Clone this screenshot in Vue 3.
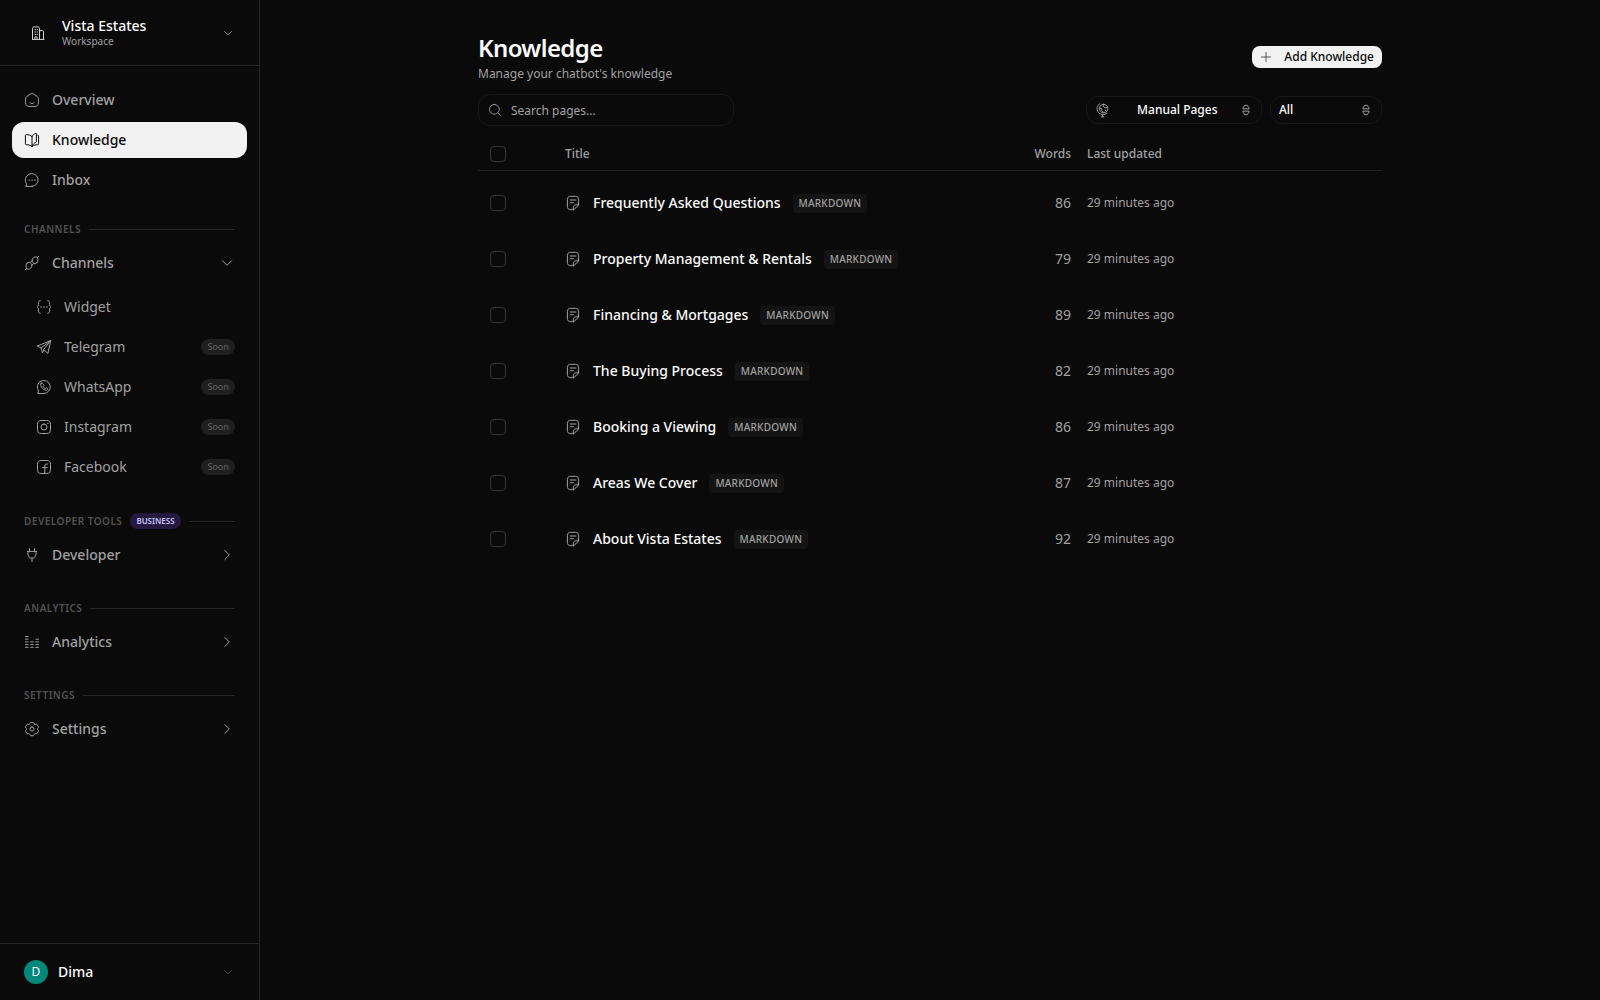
<template>
  <div class="app">
    <aside class="sidebar">
      <button class="workspace" type="button">
        <span class="workspace-logo"><Icon name="building" /></span>
        <span class="workspace-text">
          <span class="workspace-name">Vista Estates</span>
          <span class="workspace-type">Workspace</span>
        </span>
        <Icon name="chevronSmall" class="workspace-chevron" />
      </button>

      <nav class="nav">
        <a
          v-for="item in mainItems"
          :key="item.label"
          href="#"
          class="nav-item"
          :class="{ active: item.active }"
        >
          <Icon :name="item.icon" />
          <span class="nav-label">{{ item.label }}</span>
        </a>

        <section v-for="section in sections" :key="section.title" class="section">
          <div class="section-head">
            <span class="section-title">{{ section.title }}</span>
            <span v-if="section.badge" class="plan-badge">{{ section.badge }}</span>
            <span class="section-line"></span>
          </div>
          <button class="nav-item" type="button">
            <Icon :name="section.icon" />
            <span class="nav-label">{{ section.label }}</span>
            <Icon :name="section.children ? 'chevronDown' : 'chevronRight'" class="nav-chevron" />
          </button>
          <div v-if="section.children" class="children">
            <a v-for="child in section.children" :key="child.label" href="#" class="nav-item child">
              <Icon :name="child.icon" />
              <span class="nav-label">{{ child.label }}</span>
              <span v-if="child.soon" class="soon-badge">Soon</span>
            </a>
          </div>
        </section>
      </nav>

      <button class="user" type="button">
        <span class="avatar">D</span>
        <span class="user-name">Dima</span>
        <Icon name="chevronSmall" class="user-chevron" />
      </button>
    </aside>

    <main class="main">
      <div class="content">
        <header class="page-head">
          <div class="page-heading">
            <h1>Knowledge</h1>
            <p>Manage your chatbot's knowledge</p>
          </div>
          <button class="add-button" type="button">
            <Icon name="plus" />
            <span>Add Knowledge</span>
          </button>
        </header>

        <div class="toolbar">
          <label class="search">
            <Icon name="search" />
            <input v-model="query" type="text" placeholder="Search pages..." aria-label="Search pages" />
          </label>
          <div class="filters">
            <label class="select source">
              <Icon name="globe" class="select-icon" />
              <select v-model="source" aria-label="Source">
                <option>Manual Pages</option>
              </select>
              <Icon name="sort" class="select-arrow" />
            </label>
            <label class="select status">
              <select v-model="status" aria-label="Status">
                <option>All</option>
              </select>
              <Icon name="sort" class="select-arrow" />
            </label>
          </div>
        </div>

        <table class="pages">
          <thead>
            <tr>
              <th class="col-check">
                <input v-model="allSelected" type="checkbox" aria-label="Select all" />
              </th>
              <th class="col-title">Title</th>
              <th class="col-words">Words</th>
              <th class="col-updated">Last updated</th>
            </tr>
          </thead>
          <tbody>
            <tr v-for="page in filteredPages" :key="page.title">
              <td class="col-check">
                <input v-model="selected" type="checkbox" :value="page.title" :aria-label="page.title" />
              </td>
              <td class="col-title">
                <div class="page-title">
                  <Icon name="note" />
                  <span class="page-name">{{ page.title }}</span>
                  <span class="type-badge">Markdown</span>
                </div>
              </td>
              <td class="col-words">{{ page.words }}</td>
              <td class="col-updated">{{ page.updated }}</td>
            </tr>
          </tbody>
        </table>
      </div>
    </main>
  </div>
</template>

<script setup>
import { computed, h, ref } from 'vue'

// 16x16 stroke icons
const icons = {
  building: 'M2.500 14.400h11.500M2.500 14.400V3.500c0-1 .5-1.600 1.500-1.600h4c1 0 1.500.6 1.500 1.600v10.900M9.500 5.600H12c1 0 1.500.5 1.500 1.500v7.300M5 4.600h.5M7 4.600h.5M5 7h.5M7 7h.5M5 9.400h.5M7 9.400h.5M4.900 14.300v-2.400h2.200v2.400',
  home: 'M1.600 6.700c0-.8.4-1.600 1.100-2.100L6.700 1.900c.8-.6 1.800-.6 2.600 0l4 2.700c.7.5 1.100 1.300 1.100 2.100v4.500c0 1.900-1.300 3.200-3.200 3.200H4.800c-1.900 0-3.200-1.300-3.200-3.200zM6 10.800c1.200 1 2.800 1 4 0',
  book: 'M8 4.500v10.200M8 4.500C6.600 3.200 4.600 2.600 2.400 2.600c-.6 0-1 .4-1 .9v8.300c0 .6.4.9 1 .9 2.200 0 4.100.5 5.600 2 1.500-1.500 3.400-2 5.600-2 .5 0 1-.3 1-.9V4c0-.5-.3-.9-.9-.9M8 4.500c.8-1.400 2-2.500 3.500-3.100.5-.2.900 0 .9.500v7.600c0 .4-.2.700-.5.800C10.100 11 8.800 12.300 8 14.300',
  chat: 'M8 14.400H1.700l.9-2.500A6.400 6.400 0 1 1 8 14.400zM5 8.100h.8M7.700 8.100h.8M10.400 8.100h.8',
  link: 'M1.300 14.700l1.500-1.500M13.200 2.800l1.500-1.500M3 8.400c1.600-1.600 3-1.500 4 0s1.500 3-.2 4.600-3 1.500-4 .4S1.400 10 3 8.400zM13 7.600c-1.600 1.600-3 1.500-4 0s-1.500-3 .2-4.600 3-1.500 4-.4 1.400 3.400-.2 5zM6.500 7.300l2.200-2M7.400 10.600l2.200-2',
  braces: 'M4.200 1.700c-1.200 0-1.700.6-1.700 1.700v2.200c0 1.200-.5 2-1.300 2.400.8.4 1.300 1.200 1.300 2.400v2.200c0 1.100.5 1.700 1.700 1.700M11.800 1.700c1.200 0 1.700.6 1.700 1.700v2.200c0 1.200.5 2 1.300 2.400-.8.4-1.300 1.200-1.300 2.400v2.200c0 1.100-.5 1.700-1.700 1.700M4.800 8h.8M7.600 8h.8M10.400 8h.8',
  telegram: 'M1.300 7l13.300-5.400-2.700 12.800-4.400-3.700M1.300 7l3.900 2 1.300 4.700 1.400-2.600M5.200 9l9.400-7.400-7.100 9.100',
  whatsapp: 'M8 14.500H1.600l1-2.600A6.500 6.500 0 1 1 8 14.500zM5.100 4.300c-1 1-.6 3 1.300 4.900s4 2.600 5.100 1.500c.6-.6.500-1-.1-1.400-.8-.6-1.200-.7-1.700-.2-.5.500-.9.400-1.800-.5-.8-.8-.9-1.200-.4-1.700s.4-.9-.2-1.800c-.6-.9-1.100-1.200-2.200-.8z',
  instagram: 'M5.200 1.500h5.600c2.500 0 3.700 1.200 3.700 3.700v5.600c0 2.500-1.200 3.700-3.700 3.700H5.200c-2.500 0-3.700-1.200-3.700-3.700V5.200c0-2.500 1.200-3.700 3.700-3.700zM8 5a3 3 0 1 1 0 6 3 3 0 0 1 0-6zM11.500 4.400h.5',
  facebook: 'M5.200 1.500h5.600c2.500 0 3.700 1.200 3.700 3.700v5.600c0 2.500-1.200 3.700-3.700 3.700H5.200c-2.500 0-3.700-1.200-3.700-3.700V5.200c0-2.500 1.200-3.700 3.700-3.700zM11.500 5.100h-1c-1.200 0-1.700.6-1.700 1.700v7.500M6.600 8.600h4.600',
  plug: 'M5.500 1.500v2.700M10.500 1.500v2.700M3.300 4.400h9.400M4 4.400v2.400c0 2.500 1.500 4.400 4 4.400s4-1.900 4-4.400V4.400M8 11.400v3.300',
  chart: 'M1.500 2.500h2.600M1.500 5.200h2.600M1.500 7.900h2.600M1.500 10.600h2.600M1.500 13.300h2.600M6.700 7.900h2.600M6.700 10.600h2.600M6.700 13.300h2.600M11.900 5.200h2.600M11.900 7.900h2.600M11.900 10.600h2.600M11.900 13.300h2.600',
  gear: 'M8 5.900a2.100 2.100 0 1 1 0 4.200 2.100 2.100 0 0 1 0-4.200zM10.700 3.300C11.500 3.500 12.500 2.700 13.100 3.500L14.400 5.800C14.800 6.700 13.400 7.200 13.400 8S14.800 9.300 14.400 10.200L13.100 12.500C12.500 13.300 11.500 12.500 10.700 12.700S9.900 14.600 9.200 14.700H6.800C6.100 14.600 6.100 12.900 5.300 12.700S3.500 13.300 2.900 12.500L1.600 10.200C1.200 9.300 2.600 8.800 2.600 8S1.200 6.700 1.600 5.800L2.900 3.500C3.500 2.700 4.500 3.500 5.300 3.300S6.100 1.400 6.800 1.300H9.200C9.900 1.400 9.900 3.100 10.700 3.300z',
  note: 'M8.300 14.700H5.600c-2 0-3.200-1.200-3.200-3.300V4.600c0-2.100 1.200-3.300 3.200-3.300h4.800c2 0 3.200 1.200 3.200 3.300v5.200zM8.300 14.700v-2c0-1.900.9-2.900 2.800-2.900h2.500M5.200 5h5.600M5.200 7.800h3.200',
  globe: 'M8.600 2.300a4.300 4.300 0 1 1 0 8.600 4.300 4.300 0 0 1 0-8.600zM4.800 1.700C1.900 3.500 1.200 7.300 3.200 10.300c2.200 2.700 6.200 3 8.900.9M7.600 12.600v2.200M6.500 14.800h2.300M9.200 2.500l-1 1.900 1.700 1.500 2.300-.5M4.600 6l1.900.6.300 1.900 1.600 1.900M11.600 9.200l-1.500-1.200',
  search: 'M7.300 1.600a5.600 5.600 0 1 1 0 11.200 5.600 5.600 0 0 1 0-11.200zM11.600 11.500l2.900 2.900',
  plus: 'M8 3.500v9M3.500 8h9',
  sort: 'M4.900 6.500c.2-1.700 1.600-3.400 3.100-3.400s2.900 1.700 3.100 3.400zM4.900 9.500c.2 1.700 1.600 3.400 3.100 3.400s2.900-1.700 3.100-3.400z',
  chevronDown: 'M3.500 5.800L8 10.300l4.500-4.500',
  chevronRight: 'M5.800 3.500L10.300 8l-4.500 4.500',
  chevronSmall: 'M4 6.300L8 10l4-3.700'
}

const Icon = ({ name }) =>
  h('svg', { viewBox: '0 0 16 16', class: 'icon', 'aria-hidden': 'true' }, [h('path', { d: icons[name] })])

const mainItems = [
  { label: 'Overview', icon: 'home' },
  { label: 'Knowledge', icon: 'book', active: true },
  { label: 'Inbox', icon: 'chat' }
]

const sections = [
  {
    title: 'Channels',
    label: 'Channels',
    icon: 'link',
    children: [
      { label: 'Widget', icon: 'braces' },
      { label: 'Telegram', icon: 'telegram', soon: true },
      { label: 'WhatsApp', icon: 'whatsapp', soon: true },
      { label: 'Instagram', icon: 'instagram', soon: true },
      { label: 'Facebook', icon: 'facebook', soon: true }
    ]
  },
  { title: 'Developer Tools', badge: 'Business', label: 'Developer', icon: 'plug' },
  { title: 'Analytics', label: 'Analytics', icon: 'chart' },
  { title: 'Settings', label: 'Settings', icon: 'gear' }
]

const pages = [
  { title: 'Frequently Asked Questions', words: 86, updated: '29 minutes ago' },
  { title: 'Property Management & Rentals', words: 79, updated: '29 minutes ago' },
  { title: 'Financing & Mortgages', words: 89, updated: '29 minutes ago' },
  { title: 'The Buying Process', words: 82, updated: '29 minutes ago' },
  { title: 'Booking a Viewing', words: 86, updated: '29 minutes ago' },
  { title: 'Areas We Cover', words: 87, updated: '29 minutes ago' },
  { title: 'About Vista Estates', words: 92, updated: '29 minutes ago' }
]

const query = ref('')
const source = ref('Manual Pages')
const status = ref('All')
const selected = ref([])

const filteredPages = computed(() =>
  pages.filter((page) => page.title.toLowerCase().includes(query.value.toLowerCase()))
)

const allSelected = computed({
  get: () => selected.value.length === pages.length,
  set: (value) => {
    selected.value = value ? pages.map((page) => page.title) : []
  }
})
</script>

<style>
body {
  background: #0a0a0a;
}
</style>

<style scoped>
.app {
  display: flex;
  min-height: 100vh;
  background: #0a0a0a;
  color: #fafafa;
  font-family: 'Noto Sans', sans-serif;
  font-size: 14px;
  line-height: 20px;
}

.app,
.app * {
  box-sizing: border-box;
}

button,
input,
select {
  font: inherit;
  color: inherit;
  background: none;
  border: 0;
  margin: 0;
  padding: 0;
}

a {
  color: inherit;
  text-decoration: none;
}

.icon {
  width: 16px;
  height: 16px;
  flex: none;
  fill: none;
  stroke: currentColor;
  stroke-width: 1;
  stroke-linecap: round;
  stroke-linejoin: round;
}

/* Sidebar */
.sidebar {
  display: flex;
  flex-direction: column;
  flex: none;
  width: 260px;
  border-right: 1px solid #262626;
}

.workspace {
  display: flex;
  align-items: center;
  gap: 10px;
  height: 66px;
  padding: 0 24px;
  border-bottom: 1px solid #262626;
  text-align: left;
}

.workspace-logo {
  display: flex;
  align-items: center;
  justify-content: center;
  width: 28px;
  height: 28px;
  color: #d4d4d4;
}

.workspace-text {
  display: flex;
  flex: 1;
  flex-direction: column;
  padding-bottom: 2px;
}

.workspace-name {
  font-weight: 500;
  line-height: 18px;
}

.workspace-type {
  font-size: 10px;
  line-height: 12px;
  color: #a1a1a1;
}

.workspace-chevron {
  width: 14px;
  color: #a1a1a1;
}

.nav {
  flex: 1;
  padding: 16px 12px;
}

.nav-item {
  display: flex;
  align-items: center;
  gap: 12px;
  width: 100%;
  height: 36px;
  padding: 0 12px;
  border-radius: 12px;
  color: #a1a1a1;
  font-weight: 500;
  text-align: left;
}

.nav-item + .nav-item {
  margin-top: 4px;
}

.nav-item.active {
  background: #f2f2f2;
  color: #0a0a0a;
}

.nav-label {
  flex: 1;
}

.section {
  margin-top: 28px;
}

.nav-item + .section {
  margin-top: 24px;
}

.section-head {
  display: flex;
  align-items: center;
  gap: 8px;
  margin-bottom: 8px;
  padding: 0 12px;
}

.section-title {
  font-size: 10px;
  line-height: 15px;
  font-weight: 600;
  letter-spacing: 0.05em;
  text-transform: uppercase;
  color: #525252;
}

.section-line {
  flex: 1;
  height: 1px;
  background: #262626;
}

.plan-badge {
  padding: 0 6px;
  border-radius: 8px;
  background: #25193f;
  color: #c9c3ff;
  font-size: 8px;
  line-height: 16px;
  font-weight: 600;
  text-transform: uppercase;
}

.children {
  margin-top: 8px;
}

.child {
  padding-left: 24px;
  font-weight: 400;
}

.soon-badge {
  padding: 0 6px;
  border-radius: 8px;
  background: #1f1f1f;
  color: #5c5c5c;
  font-size: 9px;
  line-height: 16px;
  font-weight: 500;
}

.user {
  display: flex;
  align-items: center;
  gap: 10px;
  height: 57px;
  padding: 0 24px;
  border-top: 1px solid #262626;
  text-align: left;
}

.avatar {
  width: 24px;
  height: 24px;
  border-radius: 50%;
  background: #00897b;
  font-size: 12px;
  line-height: 24px;
  text-align: center;
}

.user-name {
  flex: 1;
  font-weight: 500;
}

.user-chevron {
  width: 14px;
  color: #525252;
}

/* Main */
.main {
  flex: 1;
  min-width: 0;
  padding: 32px 24px;
}

.content {
  max-width: 904px;
  margin: 0 auto;
}

.page-head {
  display: flex;
  align-items: center;
  justify-content: space-between;
  height: 50px;
}

.page-heading {
  align-self: flex-start;
}

h1 {
  margin: 0;
  font-size: 24px;
  line-height: 32px;
  font-weight: 600;
  letter-spacing: -0.025em;
}

.page-head p {
  margin: 0;
  font-size: 12px;
  line-height: 20px;
  color: #a1a1a1;
}

.add-button {
  display: flex;
  align-items: center;
  gap: 10px;
  height: 22px;
  padding: 0 8px 0 6px;
  border-radius: 8px;
  background: #f2f2f2;
  color: #0a0a0a;
  font-size: 12px;
  font-weight: 500;
}

.add-button .icon {
  color: #525252;
}

.toolbar {
  display: flex;
  align-items: center;
  justify-content: space-between;
  margin-top: 12px;
}

.search {
  display: flex;
  align-items: center;
  gap: 8px;
  width: 256px;
  height: 32px;
  padding: 0 8px;
  border: 1px solid #171717;
  border-radius: 12px;
  color: #a1a1a1;
}

.search .icon {
  height: 14px;
}

.search input {
  flex: 1;
  min-width: 0;
  padding-top: 2px;
  outline: none;
  font-size: 12px;
}

.search input::placeholder {
  color: #a1a1a1;
  opacity: 1;
}

.filters {
  display: flex;
  gap: 8px;
}

.select {
  position: relative;
  height: 28px;
  border: 1px solid #171717;
  border-radius: 12px;
}

.select.source {
  width: 176px;
}

.select.status {
  width: 112px;
}

.select select {
  width: 100%;
  height: 100%;
  padding-left: 8px;
  appearance: none;
  outline: none;
  font-size: 12px;
  font-weight: 500;
}

.source select {
  padding-left: 50px;
}

.select-icon,
.select-arrow {
  position: absolute;
  top: 5px;
  color: #a1a1a1;
  pointer-events: none;
}

.select-icon {
  left: 8px;
}

.select-arrow {
  right: 7px;
}

/* Table */
.pages {
  width: 100%;
  margin-top: 12px;
  border-collapse: separate;
  border-spacing: 0;
  table-layout: fixed;
}

.pages tbody::before {
  display: block;
  height: 4px;
  content: '';
}

th,
td {
  padding: 0 8px;
  text-align: left;
  color: #a1a1a1;
  font-size: 12px;
}

th {
  height: 33px;
  border-bottom: 1px solid #1f1f1f;
  font-weight: 500;
}

td {
  height: 56px;
}

.col-check {
  width: 79px;
  padding-left: 12px;
}

.col-words {
  width: 120px;
  text-align: right;
}

td.col-words {
  font-size: 14px;
}

.col-updated {
  width: 303px;
}

input[type='checkbox'] {
  display: block;
  width: 16px;
  height: 16px;
  appearance: none;
  border: 1px solid #363636;
  border-radius: 4px;
}

input[type='checkbox']:checked {
  background: #f2f2f2;
}

.page-title {
  display: flex;
  align-items: center;
  gap: 12px;
  white-space: nowrap;
}

.page-name {
  color: #fafafa;
  font-size: 14px;
  font-weight: 500;
}

.type-badge {
  padding: 0 6px;
  border-radius: 4px;
  background: #141414;
  font-size: 10px;
  line-height: 19px;
  font-weight: 500;
  letter-spacing: 0.025em;
  text-transform: uppercase;
}
</style>
